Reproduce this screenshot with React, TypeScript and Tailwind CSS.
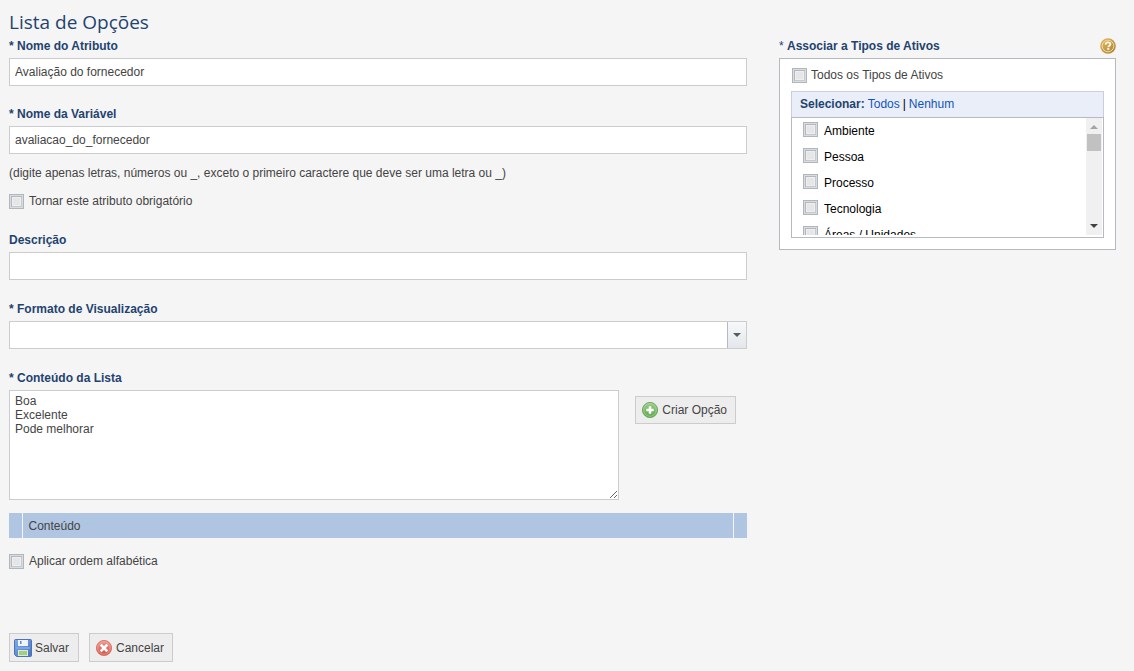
import React, { useState } from "react";

const FIELD =
  "block h-7 w-full border border-[#cccccc] bg-white px-[5px] text-xs text-[#444444] outline-none focus:border-[#8fa9cc]";
const BUTTON =
  "flex items-center whitespace-nowrap border border-[#cccccc] bg-[#ededed] text-xs text-[#444444] hover:bg-[#e4e4e4]";

function FieldLabel({ htmlFor, required, children }: { htmlFor: string; required?: boolean; children: React.ReactNode }) {
  return (
    <label htmlFor={htmlFor} className="mb-1 block h-4 text-xs leading-4 font-bold text-[#1f4370]">
      {required && <span>* </span>}
      {children}
    </label>
  );
}

function Check({ id, checked, onChange }: { id: string; checked?: boolean; onChange?: (value: boolean) => void }) {
  return (
    <input
      id={id}
      type="checkbox"
      checked={checked}
      onChange={(e) => onChange?.(e.target.checked)}
      className="size-[15px] shrink-0 appearance-none border border-[#b0b6be] bg-[#e6e6e6] shadow-[inset_0_0_0_1px_#d9dde1,inset_3px_3px_0_-1px_#b4b8be,inset_0_0_0_2px_#c6c9cd,inset_0_0_0_3px_#efefef] checked:bg-[#3d5f8c]"
    />
  );
}

function HelpIcon() {
  return (
    <svg viewBox="0 0 16 16" className="size-4" aria-hidden="true">
      <defs>
        <linearGradient id="gold" x1="0" y1="0" x2="1" y2="1">
          <stop offset="0" stopColor="#e3bd68" />
          <stop offset="1" stopColor="#ad7e2c" />
        </linearGradient>
      </defs>
      <circle cx="8" cy="8" r="7.8" fill="url(#gold)" />
      <circle cx="8" cy="8" r="5.8" fill="none" stroke="#f1dca6" strokeWidth="0.9" />
      <path
        d="M5.6 6.6C5.7 4.9 6.8 4.3 8 4.3c1.4 0 2.4.7 2.4 1.9 0 1.5-2.1 1.5-2.1 3"
        fill="none"
        stroke="#fff9e8"
        strokeWidth="1.8"
      />
      <rect x="7.3" y="10" width="2" height="1.9" fill="#fff9e8" />
    </svg>
  );
}

function AddIcon() {
  return (
    <svg viewBox="0 0 16 16" className="size-4" aria-hidden="true">
      <defs>
        <linearGradient id="green" x1="0" y1="0" x2="0" y2="1">
          <stop offset="0" stopColor="#9ccc8c" />
          <stop offset="1" stopColor="#5aa746" />
        </linearGradient>
      </defs>
      <circle cx="8" cy="8" r="7.6" fill="url(#green)" stroke="#5c9d4c" strokeWidth="0.8" />
      <circle cx="8" cy="8" r="6.3" fill="none" stroke="#b7dfa9" strokeWidth="0.6" />
      <path d="M8 4.3v7.4M4.3 8h7.4" stroke="#ffffff" strokeWidth="2.5" />
    </svg>
  );
}

function CancelIcon() {
  return (
    <svg viewBox="0 0 16 16" className="size-4" aria-hidden="true">
      <defs>
        <linearGradient id="red" x1="0" y1="0" x2="0" y2="1">
          <stop offset="0" stopColor="#ee9b90" />
          <stop offset="1" stopColor="#d94c41" />
        </linearGradient>
      </defs>
      <circle cx="8" cy="8" r="7.6" fill="url(#red)" stroke="#cf665c" strokeWidth="0.8" />
      <circle cx="8" cy="8" r="6.3" fill="none" stroke="#f3b5ad" strokeWidth="0.6" />
      <path d="M4.7 4.7l6.6 6.6M11.3 4.7l-6.6 6.6" stroke="#ffffff" strokeWidth="2.6" />
    </svg>
  );
}

function SaveIcon() {
  return (
    <svg viewBox="0 0 18 18" className="size-[18px]" aria-hidden="true">
      <defs>
        <linearGradient id="blue" x1="0" y1="0" x2="1" y2="1">
          <stop offset="0" stopColor="#82abe9" />
          <stop offset="1" stopColor="#4771bd" />
        </linearGradient>
      </defs>
      <path d="M1.5.5h15q1 0 1 1v15q0 1-1 1H2.5l-2-2v-14q0-1 1-1z" fill="url(#blue)" stroke="#4a73b8" />
      <rect x="4" y="1" width="10" height="6" fill="#eef4fd" />
      <rect x="6" y="2" width="1.5" height="3" fill="#5c87cf" />
      <rect x="2" y="8" width="14" height="2" fill="#7aa5e6" />
      <rect x="4" y="11" width="10" height="6" fill="#dcebd2" />
      <rect x="5" y="12" width="8" height="4" fill="#9fce85" />
    </svg>
  );
}

const ASSET_TYPES = ["Ambiente", "Pessoa", "Processo", "Tecnologia", "Áreas / Unidades"];

function AssetTypes() {
  const [selected, setSelected] = useState<string[]>([]);
  const toggle = (name: string, on: boolean) =>
    setSelected((old) => (on ? [...old, name] : old.filter((n) => n !== name)));

  return (
    <section className="w-[337px] shrink-0 pt-[38px]">
      <div className="mb-1 flex h-4 items-center justify-between">
        <h2 className="text-xs leading-4 font-bold text-[#1f4370]">
          <span className="font-normal">* </span>Associar a Tipos de Ativos
        </h2>
        <button type="button" aria-label="Ajuda">
          <HelpIcon />
        </button>
      </div>
      <div className="border border-[#b5b9c0] bg-white px-[11px] pt-2 pb-[11px]">
        <div className="mb-2 flex h-4 items-center gap-1 pl-px">
          <Check
            id="todos"
            checked={selected.length === ASSET_TYPES.length}
            onChange={(on) => setSelected(on ? ASSET_TYPES : [])}
          />
          <label htmlFor="todos">Todos os Tipos de Ativos</label>
        </div>
        <div className="flex h-[26px] items-center gap-[3px] border border-b-0 border-[#c9ced8] bg-[#e9eef8] px-2 pb-px">
          <strong className="text-[#1f4370]">Selecionar:</strong>
          <a href="#todos" onClick={() => setSelected(ASSET_TYPES)} className="text-[#1155bb]">
            Todos
          </a>
          <span className="text-black">|</span>
          <a href="#nenhum" onClick={() => setSelected([])} className="text-[#1155bb]">
            Nenhum
          </a>
        </div>
        <div className="border border-[#b5b9c0] pr-px pb-[2px]">
          <div className="flex h-[117px]">
            <ul className="min-w-0 flex-1 overflow-y-auto [scrollbar-width:none]">
              {ASSET_TYPES.map((name, i) => (
                <li key={name} className="flex h-[26px] items-start gap-[6px] pt-1 pl-[11px] leading-[18px] text-black">
                  <Check id={`tipo-${i}`} checked={selected.includes(name)} onChange={(on) => toggle(name, on)} />
                  <label htmlFor={`tipo-${i}`}>{name}</label>
                </li>
              ))}
            </ul>
            <div className="flex w-4 flex-col items-center bg-[#f0f0f0]" aria-hidden="true">
              <svg viewBox="0 0 16 16" className="size-4 shrink-0">
                <path d="M4 11l4-4 4 4z" fill="#a3a3a3" />
              </svg>
              <div className="h-[17px] w-[14px] bg-[#c1c1c1]" />
              <svg viewBox="0 0 16 16" className="mt-auto size-4 shrink-0">
                <path d="M4 5l4 4 4-4z" fill="#404040" />
              </svg>
            </div>
          </div>
        </div>
      </div>
    </section>
  );
}

export default function App() {
  const [required, setRequired] = useState(false);
  const [sorted, setSorted] = useState(false);

  return (
    <main className="min-h-screen bg-[#f5f5f5] pr-[18px] pb-[9px] pl-[9px] font-['Liberation_Sans',Arial,sans-serif] text-xs leading-4 text-[#444444]">
      <form className="flex items-start gap-8" onSubmit={(e) => e.preventDefault()}>
        <div className="min-w-0 flex-1">
          <h1 className="h-[38px] pt-2 font-['Trebuchet_MS','Open_Sans',sans-serif] text-[19px] leading-7 text-[#1f4370]">
            Lista de Opções
          </h1>

          <FieldLabel htmlFor="nome" required>
            Nome do Atributo
          </FieldLabel>
          <input id="nome" type="text" defaultValue="Avaliação do fornecedor" className={FIELD} />

          <div className="mt-5">
            <FieldLabel htmlFor="variavel" required>
              Nome da Variável
            </FieldLabel>
            <input id="variavel" type="text" defaultValue="avaliacao_do_fornecedor" className={FIELD} />
          </div>
          <p className="mt-[11px]">
            (digite apenas letras, números ou _, exceto o primeiro caractere que deve ser uma letra ou _)
          </p>
          <div className="mt-3 flex h-4 items-center gap-[5px]">
            <Check id="obrigatorio" checked={required} onChange={setRequired} />
            <label htmlFor="obrigatorio">Tornar este atributo obrigatório</label>
          </div>

          <div className="mt-[23px]">
            <FieldLabel htmlFor="descricao">Descrição</FieldLabel>
            <input id="descricao" type="text" className={FIELD} />
          </div>

          <div className="mt-[21px]">
            <FieldLabel htmlFor="formato" required>
              Formato de Visualização
            </FieldLabel>
            <div className="relative">
              <select id="formato" className={`${FIELD} appearance-none`}>
                <option value=""></option>
              </select>
              <span className="pointer-events-none absolute inset-y-px right-px flex w-[19px] items-center justify-center border-l border-[#b3bac2] bg-linear-to-b from-[#f7f9fb] to-[#e3e7eb]">
                <svg viewBox="0 0 8 4" className="h-1 w-2" aria-hidden="true">
                  <path d="M0 0h8L4 4z" fill="#565b60" />
                </svg>
              </span>
            </div>
          </div>

          <div className="mt-[21px]">
            <FieldLabel htmlFor="conteudo" required>
              Conteúdo da Lista
            </FieldLabel>
            <div className="flex items-start gap-4 pr-[11px]">
              <textarea
                id="conteudo"
                defaultValue={"Boa\nExcelente\nPode melhorar"}
                className="block h-[110px] min-w-0 flex-1 resize border border-[#cccccc] bg-white px-[5px] py-[3px] text-xs leading-[14px] text-[#444444] outline-none"
              />
              <button type="button" className={`${BUTTON} mt-[6px] h-7 gap-1 pr-2 pl-[6px]`}>
                <AddIcon />
                Criar Opção
              </button>
            </div>
          </div>

          <table className="mt-[13px] w-full border-collapse bg-[#b0c5e1]">
            <thead>
              <tr className="h-[25px]">
                <td className="w-[13px]" />
                <th scope="col" className="border-x border-[#f5f5f5] px-[6px] text-left font-normal">
                  Conteúdo
                </th>
                <td className="w-[14px]" />
              </tr>
            </thead>
          </table>

          <div className="mt-[15px] flex h-4 items-center gap-[5px]">
            <Check id="ordem" checked={sorted} onChange={setSorted} />
            <label htmlFor="ordem">Aplicar ordem alfabética</label>
          </div>

          <div className="mt-16 flex gap-[10px]">
            <button type="submit" className={`${BUTTON} h-[29px] gap-[3px] pr-[9px] pl-1`}>
              <SaveIcon />
              Salvar
            </button>
            <button type="button" className={`${BUTTON} h-[29px] gap-1 pr-2 pl-[6px]`}>
              <CancelIcon />
              Cancelar
            </button>
          </div>
        </div>

        <AssetTypes />
      </form>
    </main>
  );
}
